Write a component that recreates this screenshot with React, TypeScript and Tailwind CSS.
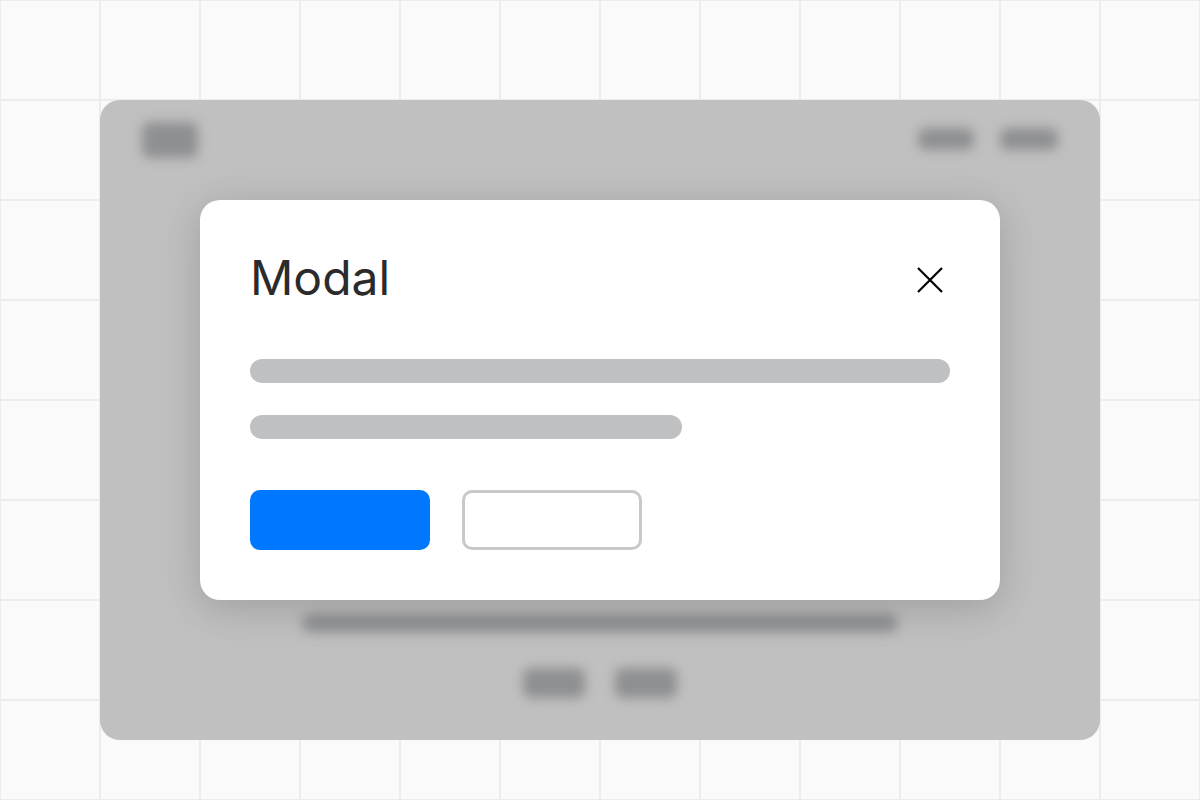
import React from "react";

const Blob: React.FC<{ className: string }> = ({ className }) => (
  <div className={`bg-[#8e8f91] blur-[6px] ${className}`} />
);

export default function App() {
  return (
    <div
      className="h-[800px] w-[1200px] overflow-hidden bg-[#fafafa] bg-[linear-gradient(to_right,#ececec_2px,transparent_2px),linear-gradient(to_bottom,#ececec_2px,transparent_2px)] bg-[size:100px_100px] bg-[position:-1px_-1px] p-[100px] pb-[60px]"
      style={{ fontFamily: "Inter, 'Noto Sans', sans-serif" }}
    >
      <div className="relative h-[640px] w-[1000px] rounded-[20px] bg-[#c0c0c0]">
        {/* blurred page behind the dialog */}
        <div className="flex h-full flex-col">
          <div className="flex items-start justify-between px-[42px] pt-[22px]">
            <Blob className="h-[36px] w-[56px] rounded-[8px]" />
            <div className="mt-[6px] flex gap-[26px]">
              <Blob className="h-[22px] w-[56px] rounded-[8px]" />
              <Blob className="h-[22px] w-[58px] rounded-[8px]" />
            </div>
          </div>
          <div className="mt-auto flex flex-col items-center pb-[42px]">
            <Blob className="h-[18px] w-[596px] rounded-full" />
            <div className="mt-[36px] flex gap-[30px]">
              <Blob className="h-[30px] w-[62px] rounded-[8px]" />
              <Blob className="h-[30px] w-[62px] rounded-[8px]" />
            </div>
          </div>
        </div>

        {/* dialog */}
        <div className="absolute left-[100px] top-[100px] flex h-[400px] w-[800px] flex-col rounded-[20px] bg-white px-[50px] pt-[50px] shadow-[0_8px_40px_rgba(0,0,0,0.18)]">
          <div className="flex items-center justify-between">
            <h2 className="text-[48px] font-normal leading-[56px] text-[#2b2b2b]">Modal</h2>
            <button className="mr-[6px] mt-[4px] flex h-[28px] w-[28px] items-center justify-center text-black">
              <svg width="28" height="28" viewBox="0 0 28 28" fill="none" stroke="currentColor" strokeWidth="2.2">
                <path d="M2 2L26 26M26 2L2 26" />
              </svg>
            </button>
          </div>
          <div className="mt-[53px] h-[24px] w-[700px] rounded-full bg-[#bfc0c2]" />
          <div className="mt-[32px] h-[24px] w-[432px] rounded-full bg-[#bfc0c2]" />
          <div className="mt-[51px] flex gap-[32px]">
            <button className="h-[60px] w-[180px] rounded-[10px] bg-[#0077ff]" />
            <button className="h-[60px] w-[180px] rounded-[10px] border-[3px] border-[#c8c8c8] bg-white" />
          </div>
        </div>
      </div>
    </div>
  );
}
